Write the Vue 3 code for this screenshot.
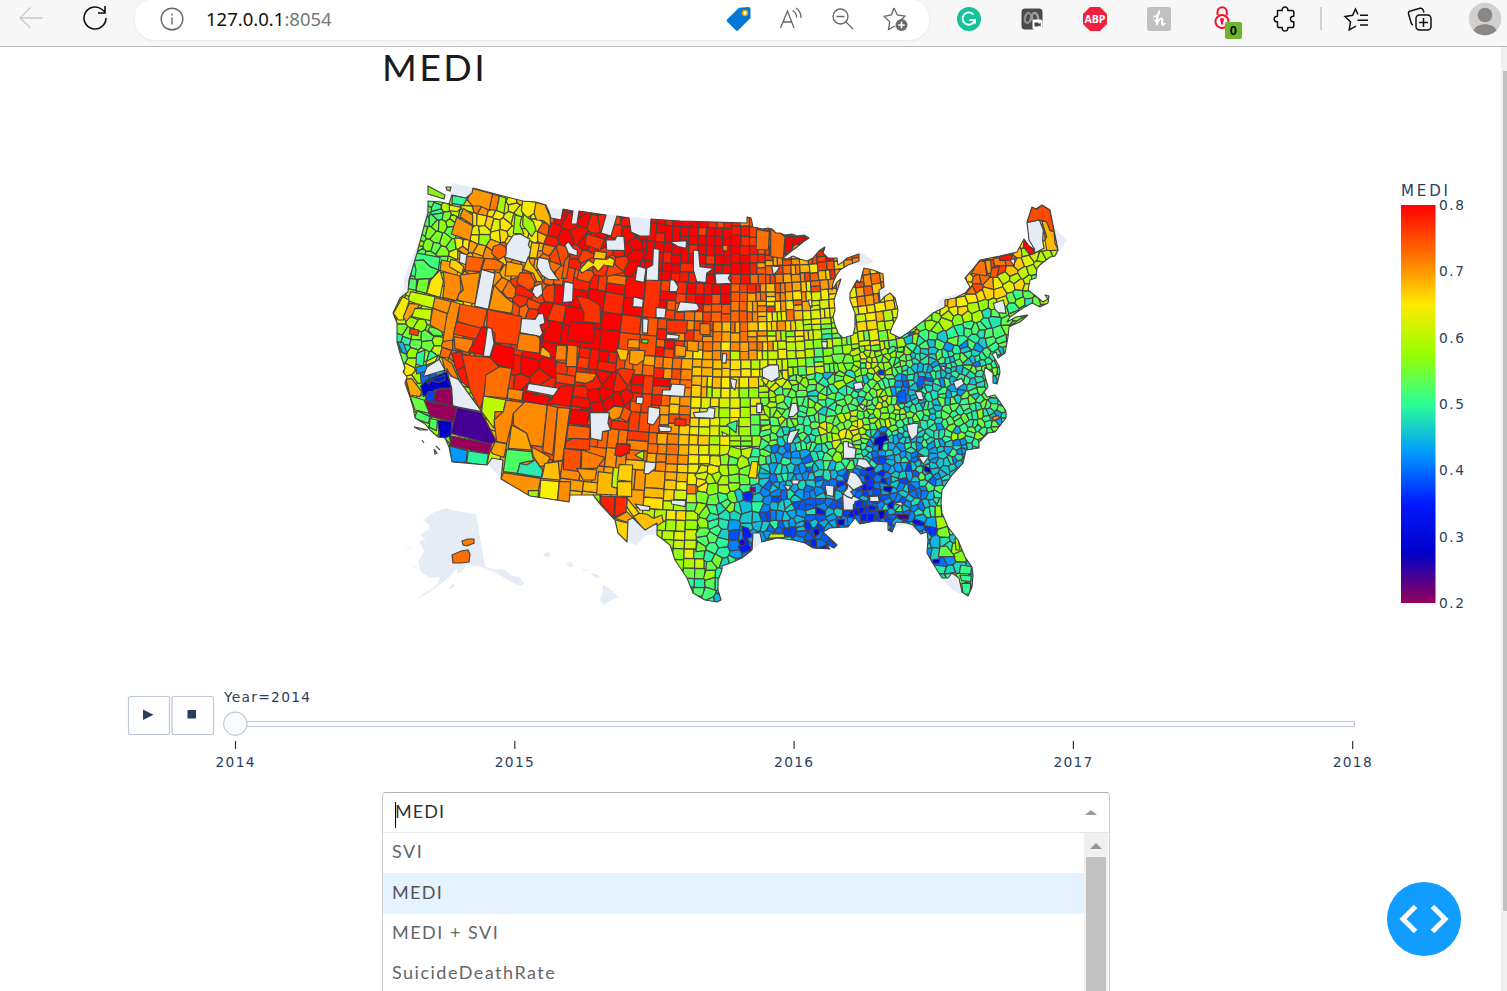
<script setup>
// ---------- colour scale ----------
const scale = [
  [0.2, 150, 0, 90], [0.275, 0, 0, 200], [0.35, 0, 25, 255], [0.425, 0, 152, 255],
  [0.5, 44, 255, 150], [0.575, 151, 255, 0], [0.65, 255, 234, 0], [0.725, 255, 111, 0], [0.8, 255, 0, 0]
]
function colour(v) {
  v = Math.max(0.2, Math.min(0.7999, v))
  const i = Math.floor((v - 0.2) / 0.075)
  const a = scale[i], b = scale[i + 1], t = (v - a[0]) / 0.075
  return `rgb(${[1, 2, 3].map(k => Math.round(a[k] + (b[k] - a[k]) * t)).join(',')})`
}
const stops = scale.map(s => ({ o: (0.8 - s[0]) / 0.6, c: `rgb(${s[1]},${s[2]},${s[3]})` })).reverse()

// ---------- outline of the counties that have data ----------
const outline = 'M428,201 441,202 449,204 452,195 466,198 472,193 473,188 503,196 523,201 536,202 546,205 549,212 551,218 561,220 563,209 573,211 571,224 577,224 579,211 606,215 601,233 611,236 617,216 629,218 631,232 640,236 650,236 651,219 680,221 747,223 747,217 751,218 753,227 763,229 768,228 772,229 776,233 780,233 785,235 792,234 797,236 804,235 809,238 803,242 797,247 789,253 783,258 787,259 793,256 800,259 807,261 813,258 820,250 825,247 823,253 828,258 837,258 838,265 843,262 847,258 859,254 859,261 848,265 840,270 836,276 833,283 832,290 837,282 841,279 838,288 834,300 835,310 833,317 835,325 838,333 843,338 853,335 855,327 855,313 850,300 850,293 857,280 860,283 862,275 864,268 873,270 883,274 884,287 879,290 880,302 884,297 890,293 895,298 898,310 897,317 892,327 890,333 900,338 909,332 918,325 926,319 933,313 945,307 945,300 955,298 965,293 970,287 965,278 972,270 980,260 1000,256 1017,252 1024,239 1029,246 1035,250 1029,240 1027,222 1032,207 1036,209 1042,205 1050,210 1054,230 1058,250 1055,256 1050,257 1045,261 1041,264 1037,268 1036,278 1030,280 1028,290 1037,297 1043,302 1048,299 1045,295 1049,296 1048,303 1040,307 1032,303 1023,308 1010,317 1007,322 1016,317 1027,315 1018,322 1009,327 1008,337 1005,353 998,358 996,352 992,354 999,366 1000,372 997,384 993,383 993,373 985,367 984,373 988,387 984,392 987,397 995,395 1000,402 1006,411 1006,418 995,432 988,433 979,442 979,448 966,450 963,463 952,475 942,490 941,503 942,513 948,527 958,540 965,557 972,567 973,575 972,587 968,596 962,592 959,578 952,573 948,578 942,578 937,570 932,562 927,553 928,540 927,532 921,534 913,525 907,523 896,522 892,532 888,530 888,522 875,521 860,524 855,518 848,527 830,528 823,532 837,545 834,548 826,544 830,549 813,548 805,543 793,540 777,538 762,542 760,533 753,533 752,550 742,558 733,562 722,566 722,570 718,580 718,590 721,600 717,602 705,600 693,593 687,578 675,560 670,545 657,535 657,523 645,530 633,518 628,520 627,542 618,533 615,520 600,504 593,495 570,495 569,502 530,496 501,479 503,460 492,458 487,465 452,462 449,447 445,438 438,437 430,430 425,424 415,418 413,407 410,397 405,383 407,377 403,372 405,368 400,353 397,342 397,323 393,313 400,298 408,292 409,280 417,253 421,238 425,223 428,213Z'

// ---------- regional levels: x, y, value * 100 ----------
const levels = '435,210,52 440,240,55 430,262,52 455,215,58 480,235,64 500,225,64 520,215,62 535,200,66 525,240,61 480,205,71 500,250,70 470,260,70 545,245,72 560,235,80 570,215,81 530,270,70 530,290,76 600,240,78 600,265,75 590,300,82 620,300,79 640,260,82 680,240,82 730,250,81 715,290,79 690,300,79 760,245,77 785,250,73 770,280,73 810,275,71 825,258,74 740,285,76 560,330,82 600,340,83 660,320,78 660,345,77 690,330,73 720,320,71 750,310,73 750,340,70 790,310,67 820,310,63 800,340,61 830,340,54 815,360,56 690,370,69 720,370,66 750,370,65 780,365,61 640,345,73 530,370,79 570,370,77 610,390,82 640,385,78 640,360,70 600,370,79 560,395,78 660,390,77 680,395,68 720,400,61 760,400,60 670,415,72 640,420,76 650,445,73 670,450,71 690,440,67 720,440,61 750,440,57 720,460,61 640,470,69 665,470,70 690,480,66 720,480,59 700,510,57 740,470,56 735,500,53 720,520,50 750,500,46 680,520,62 680,550,60 700,560,56 700,590,50 720,550,49 740,540,40 745,520,44 765,450,48 790,450,44 770,480,45 790,500,42 780,520,41 800,470,44 810,440,50 820,500,41 820,530,39 780,420,54 800,400,52 820,390,50 800,385,55 840,370,55 830,410,50 870,360,58 860,390,50 900,360,54 920,350,50 880,335,60 870,310,64 870,285,72 890,310,65 860,300,69 870,410,52 885,400,61 900,390,42 920,385,46 890,420,57 860,430,58 830,430,60 850,430,60 880,440,41 900,440,45 860,500,39 875,480,39 890,460,44 900,480,43 930,480,45 910,500,43 920,520,42 930,460,47 950,430,50 950,450,47 980,420,49 990,415,50 970,400,50 940,400,49 930,380,48 960,380,48 980,370,50 930,345,48 960,335,48 985,340,46 1000,345,50 940,320,58 960,310,60 950,300,70 980,300,64 980,280,69 1000,290,62 1000,265,73 1015,275,62 1030,265,60 1040,290,57 1010,300,56 1030,310,53 1020,320,54 990,315,53 930,525,42 945,520,60 950,545,52 935,555,42 950,570,48 965,580,50 400,310,62 415,330,58 430,340,54 405,345,48 415,360,60 410,380,66 430,375,40 420,365,55 410,300,62 420,270,51 435,300,62 450,350,74 480,340,76'
  .split(' ').map(s => s.split(',').map(Number))
function level(x, y) {
  let sw = 0, sv = 0
  for (const [ax, ay, v] of levels) {
    const d = (ax - x) ** 2 + (ay - y) ** 2 + 20
    const w = 1 / (d * d)
    sw += w; sv += w * v
  }
  return sv / sw / 100
}

let seed = 20147
function rnd() {
  seed = (seed * 1664525 + 1013904223) >>> 0
  return seed / 4294967296
}
// conic bend of the county grid
const bend = (u, v) => [u + 0.00092 * (u - 740) * (v - 400), v - 0.00046 * (u - 740) ** 2]

function cellSize(x, y) {
  if (x < 470) return y < 265 ? 8.5 : y < 400 ? 9.5 : 16
  if (x < 548) return y < 260 ? 10.5 : y < 320 ? 11.5 : 16
  if (x < 655) return y < 285 ? 12.5 : y < 355 ? 22 : y < 430 ? 12 : 16
  if (x < 700) return y < 330 ? 11 : 10.5
  if (x < 760) return y < 300 ? 10 : 8.9
  if (x < 850) return y > 370 ? 7.5 : 8.2
  if (y < 345) return 8.8
  if (x > 925 && y > 515) return 9.8
  return x > 860 && y > 350 && y < 510 ? 6.2 : 7.2
}
function irregular(x, y) {
  if (x > 838 && !(y < 350 && x < 905)) return true
  if (x > 765 && y > 375) return true
  if (x > 700 && y > 440 && y - 440 > (760 - x) * 0.4) return true
  if (x < 548 && y < 400) return true
  if (x < 640 && y < 275) return true
  return x > 590 && x < 632 && y > 372 && y < 425
}
const seeds = []
const cells = []
const P = p => p.map(q => q[0].toFixed(1) + ',' + q[1].toFixed(1)).join(' ')
function tint(x, y) {
  const n = x < 660 ? 0.035 : x < 760 ? 0.055 : 0.078
  const spike = rnd() < 0.06 ? (rnd() - 0.5) * 0.14 : 0
  return colour(level(x, y) + (rnd() + rnd() - 1) * n + spike)
}
function split(u0, v0, u1, v1) {
  const [x, y] = bend((u0 + u1) / 2, (v0 + v1) / 2)
  const w = u1 - u0, h = v1 - v0, s = cellSize(x, y) * 1.17
  if (w * h > s * s || w > 2 * s || h > 2 * s) {
    const t = 0.44 + rnd() * 0.12
    if (w > h * (0.85 + rnd() * 0.3)) {
      split(u0, v0, u0 + w * t, v1); split(u0 + w * t, v0, u1, v1)
    } else {
      split(u0, v0, u1, v0 + h * t); split(u0, v0 + h * t, u1, v1)
    }
    return
  }
  if (x < 380 || x > 1075 || y < 175 || y > 615) return
  const c = tint(x, y), irr = irregular(x, y)
  seeds.push({ x: x + (rnd() - 0.5) * w * 0.6, y: y + (rnd() - 0.5) * h * 0.6, s, c, irr })
  cells.push({ c, p: P([bend(u0, v0), bend(u1, v0), bend(u1, v1), bend(u0, v1)]) })
}
for (let u = 340; u < 1120; u += 39) for (let v = 170; v < 700; v += 38) split(u, v, u + 39, v + 38)

// irregular counties: cells nearest to each seed
const bins = {}
const key = (x, y) => Math.floor(x / 30) + '_' + Math.floor(y / 30)
seeds.forEach(s => (bins[key(s.x, s.y)] ||= []).push(s))
for (const s of seeds) {
  if (!s.irr) continue
  const r = s.s * 1.6
  let poly = [[s.x - r, s.y - r], [s.x + r, s.y - r], [s.x + r, s.y + r], [s.x - r, s.y + r]]
  for (let i = -1; i <= 1; i++) for (let j = -1; j <= 1; j++) {
    for (const o of bins[key(s.x + i * 30, s.y + j * 30)] || []) {
      if (o === s) continue
      const nx = o.x - s.x, ny = o.y - s.y
      const m = (nx * (o.x + s.x) + ny * (o.y + s.y)) / 2
      const out = []
      poly.forEach((a, k) => {
        const b = poly[(k + 1) % poly.length]
        const da = a[0] * nx + a[1] * ny - m, db = b[0] * nx + b[1] * ny - m
        if (da <= 0) out.push(a)
        if (da * db < 0) {
          const t = da / (da - db)
          out.push([a[0] + (b[0] - a[0]) * t, a[1] + (b[1] - a[1]) * t])
        }
      })
      poly = out
    }
  }
  if (poly.length > 2) cells.push({ c: s.c, p: P(poly) })
}

// ---------- individually drawn counties, in thirds of a pixel from each sheet's origin ----------
const L = '#e5ecf6'
const parse = txt => txt.trim().split('\n').map(l => {
  const [c, ...p] = l.trim().split(' ')
  return { c: c === 'L' ? L : c, p: p.join(' ') }
})
const sheets = [
  { at: [380, 170], items: parse(`
#ff9800 278,55 338,72 330,122 300,108 278,108 262,90
#ff7800 338,72 358,78 350,122 328,118
#a6f500 358,78 378,84 372,130 350,122
#f5eb00 428,92 468,96 470,125 440,145 424,122
#ffb400 468,97 495,104 510,140 512,170 490,152 470,150 462,130
#2fff90 218,76 262,84 250,106 216,100
#ff9200 250,115 278,135 278,165 240,140
#ff9200 230,142 278,168 270,212 214,192
#f5eb00 208,105 245,112 232,125 208,122
#9dfa00 405,135 425,140 420,165 432,192 400,190
#9dfa00 430,132 460,155 468,180 455,200 428,165
#3cff80 105,248 180,262 175,300 150,290 130,270 102,272
#4cff60 102,272 130,270 150,290 175,300 160,322 150,326 104,328 108,300
#4cff60 90,325 110,328 108,362 84,356
#70ff30 115,328 148,326 140,370 108,362
#ffe600 180,300 190,335 180,382 140,370 152,330
#ffa000 185,270 240,282 230,320 180,300
#ffd000 212,268 230,272 252,290 245,312 225,300 208,290
L 240,248 262,255 258,285 238,276
#ff8a00 190,305 240,318 243,360 228,392 188,382 193,345
#ff8f00 240,315 300,308 285,402 232,390 236,372 250,360
L 305,298 345,310 325,418 284,408
#ff9200 342,345 375,380 400,400 395,430 326,418
#ff6000 260,258 312,265 300,305 255,302
#ff7000 315,265 345,268 370,280 360,300 305,298
L 400,195 420,192 450,208 445,225 454,240 440,280 375,262 380,225
#ff6000 340,230 362,222 378,232 378,255 355,270 335,250
#ffa500 380,275 430,285 425,318 375,318
#ffc000 445,260 450,278 465,295 490,335 470,335 460,310 430,298
#ffc800 455,218 478,220 470,265 448,262
L 475,262 505,268 512,295 530,322 538,330 505,328 485,315 470,290
#ff5000 420,308 450,310 465,335 462,350 440,365 410,335
L 462,350 485,340 488,370 472,385 455,370
#ff1a00 410,345 430,350 462,372 455,385 405,372
#c8ff00 92,365 165,380 160,415 120,405 84,392
#f5eb00 68,380 88,390 70,450 55,450 40,430
#ffa000 88,400 120,403 100,430 78,455 70,440
#c8ff00 105,415 155,418 152,452 95,440
#5aff40 150,470 185,480 188,498 158,495 144,480
#ff3c00 90,475 116,480 114,497 88,492
#13b0e0 52,515 70,518 82,552 68,548
#2cf5a0 110,550 135,540 130,590 108,582
#0098ff 108,592 138,585 146,600 110,612
#e5f000 138,575 175,555 165,575 140,585
L 140,592 178,568 195,600 130,620
#ff9200 165,382 214,395 208,432 158,415
#ff8a00 158,415 205,432 195,490 150,465
#ff8a00 214,393 240,402 218,510 188,515 200,440
#ff5500 240,402 322,418 308,480 232,455
#ff4000 322,418 425,440 418,525 345,518 345,490 320,472
#ff3c00 230,455 306,475 290,508 220,492
#ff8000 222,500 280,510 270,550 225,535
#ff0800 305,470 322,475 312,555 265,545 290,505
L 322,472 335,475 342,520 330,560 310,558
#ff0000 345,520 402,535 400,598 340,580 332,560
#ff1500 215,550 245,545 256,585 230,603
#ff1500 230,603 258,585 270,655 245,635
#ff4000 246,555 330,562 360,595 360,605 320,635 318,660 300,720 270,660
#ff8000 185,560 215,580 240,635 228,630 195,600
L 425,445 465,448 475,432 490,430 495,460 480,465 488,490 480,500 420,488
#ff8000 418,490 470,497 480,505 478,550 410,540
#ffb000 485,528 510,548 512,565 480,555
L 553,335 580,340 578,395 548,398
L 555,225 565,215 580,235 592,240 592,258 565,250
#ff3000 620,192 675,208 660,240 615,225
#ff5a00 555,270 570,255 560,325 545,325
#ffe000 600,298 625,270 640,280 645,265 680,268 690,262 704,270 700,290 672,285 655,305 640,288 605,310
#ffc000 645,243 680,248 675,268 640,265
#ff0000 570,455 645,462 640,520 562,510
#ff3000 590,378 625,385 660,405 662,460 610,455 612,430
#ff8000 563,525 592,528 590,590 558,590
#ff8000 530,525 560,528 558,570 525,570`) },
  { at: [380, 370], items: parse(`
L 200,-5 212,18 235,28 305,125 218,108 212,45
#0000c8 122,48 140,30 200,5 215,55 185,55 165,60 130,80
#0019e0 138,35 195,15 195,30 175,38 155,32 145,42
#0040ff 145,65 165,65 160,95 135,90
#96005a 168,62 180,57 215,55 218,108 160,95
#96005a 132,92 230,110 222,158 150,138
#460096 232,112 305,128 350,215 330,222 212,190
#0000c8 172,150 216,155 212,205 180,205
#96005a 215,198 335,222 328,252 208,228
#0098ff 208,228 262,242 258,278 215,275
#2cf5a0 265,243 325,252 320,287 260,278
#6aff40 90,78 132,90 148,130 105,120
#4cff60 112,122 150,140 145,160 103,145
#4cff60 150,145 172,150 170,182 148,172
#70ff30 195,205 208,198 212,225
#ffa500 78,28 95,25 125,65 120,80 90,75
#c0fa00 310,78 378,90 370,125 345,125 342,175 305,125
#ff7000 318,15 358,-10 395,-5 380,85 312,78
#ff8a00 378,90 435,98 400,130 395,160 380,220 350,215 342,150 370,125
#ff8a00 435,95 502,105 488,230 450,225 440,190 400,165 400,130
#ff7800 502,105 533,112 518,255 488,245
#ff8800 533,112 570,115 548,270 520,275
#ffa500 395,165 440,190 455,240 385,235
#4cff60 380,238 455,245 460,272 440,275 420,280 412,310 370,305
#2ceab0 420,280 440,285 465,270 488,300 484,322 412,310
#ffa500 455,230 510,262 500,285 480,290 460,260
#ffc000 495,280 535,275 540,330 485,325
#f8f000 482,330 538,335 532,390 478,385
#ff8a00 538,335 572,335 568,397 533,390
#ff9200 370,308 482,325 475,362 445,378 363,328
#a6f500 445,362 476,362 474,382 445,378
#ffa000 345,215 380,222 372,262 340,252 332,245
#ff8a00 385,55 430,62 425,92 382,85
#ff8000 588,5 650,12 640,30 618,40 585,35
L 445,40 540,55 525,78 440,62
#ff0000 430,68 512,80 500,105 428,92
#ff0c00 540,50 580,45 572,110 505,100
#ff0000 572,118 628,122 620,168 568,160
L 630,128 688,128 684,160 692,180 668,185 665,212 632,205
#ff6000 565,165 630,172 628,208 560,205
#ff4000 558,215 580,205 630,208 628,240 555,235
#ff5000 552,235 604,242 600,305 550,298
#ff7c00 605,240 660,258 675,262 650,295 604,295
#ffa000 590,295 650,300 645,330 610,330
#ff1500 710,220 750,222 748,250 705,255
#ffb800 655,305 698,310 695,350 712,355 710,375 650,372
#ffd000 718,283 758,285 755,335 712,330
#ffd000 712,335 755,335 755,380 712,378
#ff2000 662,378 704,380 702,445 662,400
#ff2800 706,380 742,383 738,425 705,442
#ffd500 742,385 778,430 760,440 740,410
#ffa000 705,445 740,425 760,445 750,460
#ffd500 705,450 748,460 742,517 712,495
#ffc000 760,440 778,430 800,432 820,445 845,435 850,455 835,465 810,500 800,490
#a6f500 638,375 660,375 660,400`) },
  { at: [600, 190], items: parse(`
L 18,150 45,150 50,138 72,140 75,182 20,180
L 160,175 178,178 175,272 138,270 140,235 158,225
L 112,228 138,235 132,278 105,272
L 210,155 260,152 258,175 235,170
L 280,180 296,182 300,230 342,235 320,250 318,278 290,275 280,240
L 345,252 392,250 385,265 395,280 348,282
L 100,320 130,328 128,352 98,350
L 168,352 198,355 195,384 168,382
L 240,335 290,340 298,355 290,362 230,365
L 210,270 222,270 235,290 230,305 208,305
L 128,385 145,388 142,430 128,428
L 200,432 238,436 235,447 198,446
L 188,600 210,600 215,582 256,585 252,620 186,615
L 487,535 510,525 535,525 538,560 515,575 487,560
L 390,565 410,570 405,600 395,590
L 368,490 380,492 378,520 366,518
L 515,228 540,230 530,245 520,255
L 110,620 130,622 128,642 108,640
L 625,330 635,330 636,352 628,345
L 665,455 682,455 680,475 667,472
L 470,640 487,640 487,660 470,660
#4cff40 125,448 145,450 143,460 125,458
#ffc400 48,475 85,480 80,510 60,510
#ff9a00 85,448 118,450 118,475 82,472
#ffa000 90,480 135,482 132,510 110,525 88,520
#ff7000 470,118 508,125 505,180 468,178
#ff7000 512,118 540,128 555,140 550,205 512,200
#ff8000 368,165 384,167 382,183 368,182
#ff0000 558,140 582,140 578,175 552,195
#ff0000 585,140 632,140 575,170
#ff3000 200,390 262,392 260,430 200,428
#ff7c00 300,400 330,402 330,435 300,432
#ff9800 262,452 296,455 294,485 262,482
#ff9800 225,465 258,470 256,500 225,498`) },
  { at: [600, 400], items: parse(`
L 145,20 180,25 178,48 160,75 142,70
L 135,185 168,188 165,205 145,222 132,220
L 175,78 215,82 212,95 180,95
L 280,38 320,35 325,22 345,25 342,55 285,52
L 570,95 598,88 585,110 575,130 562,130 562,115
L 105,312 150,320 148,332 120,330
L 213,300 258,302 255,320 215,312
L 675,255 702,258 700,290 680,285
L 735,125 755,130 768,150 765,175 730,170
L 745,215 770,225 760,245 770,265 752,275 760,285 750,330 728,330 730,280 742,265
L 470,12 485,12 485,38 470,38
L 575,10 590,10 595,35 580,50 565,50
L 550,255 572,258 565,272
L 575,240 598,240 595,252 577,252
L 365,95 385,105 370,110
#96005a 450,262 466,262 466,276 450,276
#0019ff 425,378 445,385 458,410 440,415 455,450 425,460 415,440 430,420
#0000e0 415,425 430,415 438,430 425,440
#2cff90 388,70 412,62 408,98 380,75
#ffd800 455,185 474,185 470,235 445,232
#c8f000 510,402 552,402 555,412 505,415
#0000c8 712,358 734,358 732,375 714,375
#0000d0 640,390 655,385 660,400 645,410
#ff2800 226,55 258,58 256,78 224,76
#ff1000 50,132 90,135 88,158 62,170 45,165
#9dfa00 105,165 132,150 130,180`) },
  { at: [840, 390], items: parse(`
L 10,155 25,155 25,170 48,175 45,205 10,205
L 55,205 78,208 95,230 75,235 50,225
L 30,245 48,250 60,265 70,285 40,300 20,280
L 8,310 22,320 35,325 40,318 60,328 40,345 40,360 10,360
L 88,320 115,318 118,335 90,335
L 200,105 220,100 235,100 232,135 215,150 205,130
L 235,200 268,198 250,222
L 55,45 75,45 70,60
L 232,10 255,20 245,32 235,28
L 160,340 185,335 188,348
#0000c8 105,145 140,132 145,150 132,155 125,182 115,180 115,165 100,165
#0000c8 250,225 270,235 275,250 255,245
#0000d0 130,290 158,290 152,308 132,302
#460096 163,372 208,374 205,388 180,388
#0019ff 62,370 82,370 82,395 62,392
#0019ff 82,370 105,370 100,395 82,395
#0030ff 45,335 65,330 70,350 45,355
#0019ff 85,345 110,350 105,362 85,360
#0000d0 115,362 135,362 132,385 118,388
#60ff40 300,470 320,468 345,500 295,500
#2cff90 362,525 395,530 392,552 358,550
#2cff90 360,555 394,558 392,575 365,572
#2cff90 365,580 392,580 390,610 370,615
#0000c8 280,508 300,508 298,520 275,520
#a6f500 345,445 355,445 360,480 348,480
#ff8000 455,82 475,76 478,86 462,92`) },
  { at: [850, 190], items: parse(`
L 530,97 568,90 580,120 578,150 582,175 555,188 545,170 528,155
#ff4800 530,97 545,50 560,58 575,45 600,60 613,118 600,125 585,95 568,90
#ffb800 575,92 590,96 600,122 612,125 615,160 625,180 600,182 590,180 585,150 590,140
#ff0000 522,150 535,160 555,190 540,195 520,170
#ff7000 365,250 375,230 390,212 405,215 410,258
#ff9800 405,212 422,210 425,250 412,250
#ff5000 425,235 448,230 440,262 420,262
#ff1000 448,200 488,192 485,210 450,212
L 430,340 460,330 465,350 468,370 445,368 435,358
L 310,575 335,565 342,582 318,598
L 195,605 215,605 222,630 205,628
L 10,580 35,575 40,595 15,600
L 270,530 285,530 285,545
L 480,210 495,205 492,228
#0030ff 85,540 102,540 102,555 85,555
#0060ff 145,605 165,600 170,640 140,635
#0060ff 205,560 225,560 215,600 200,585
#ff9800 195,418 207,420 207,432 195,430
#0060ff 175,430 192,424 192,432 178,438`) }
]
const base = [
  '452,183 470,187 550,208 650,219 750,222 751,240 548,240 470,200 452,195 447,210 449,200',
  '428,201 420,240 413,255 404,278 404,290 398,297 412,305 425,260 440,220 440,200',
  '487,463 501,479 510,455 495,455', '627,540 636,546 646,535 657,535 655,515 628,515',
  '1040,220 1054,228 1067,240 1056,256 1040,250', '838,262 860,252 870,258 874,262 862,266 850,264',
  '935,563 943,580 953,590 962,595 965,570 940,560', '885,520 890,530 905,524 920,533 930,533 928,515',
  '716,565 735,558 740,545 760,530 762,542 750,552 722,570 718,595', '939,300 945,297 965,292 965,300 945,312 936,311',
  '880,285 886,288 886,296 880,302', '890,332 903,336 903,342 890,340',
  '980,350 984,372 990,395 1002,410 985,400 978,362', '989,395 1000,400 1008,416 1000,420 990,410'
]
const alaska = 'M446,508 456,511 476,514 485,567 497,570 503,569 513,576 520,577 524,584 519,586 505,578 496,573 485,568 476,566 466,565 462,572 457,574 458,567 449,577 442,583 434,589 425,595 416,599 425,593 436,586 440,577 430,578 420,571 418,562 424,551 419,541 426,539 419,535 428,530 430,526 424,520 434,512Z'
const islands = ['449,587 453,584 455,586 450,589', '406,546 411,549', '413,566 417,568', '543,554 549,552 550,556 546,557', '567,563 571,562 574,566 569,567', '582,570 589,571', '591,573 598,575 600,578 594,577', '603,585 610,589 618,597 609,601 604,605 600,599 603,593']
const coast = ['428,186 445,195 444,199 428,194', '446,187 451,187 450,191 447,190', '414,427 420,428 428,430 420,430', '422,440 424,443', '436,446 440,450', '434,449 437,453 435,454', '1010,326 1020,319 1028,315 1020,322']
const alaskan = [{ c: '#ff8000', p: '462,541 468,539 474,539 474,543 467,546 463,545' }, { c: '#ff6f00', p: '452,555 461,551 468,550 470,554 469,562 461,563 453,563' }]
const ticks = ['0.8', '0.7', '0.6', '0.5', '0.4', '0.3', '0.2']
const years = [2014, 2015, 2016, 2017, 2018]
const options = ['SVI', 'MEDI', 'MEDI + SVI', 'SuicideDeathRate']
</script>

<template>
  <div class="window">
    <header class="toolbar">
      <div class="nav">
        <svg width="24" height="24" viewBox="0 0 24 24" fill="none" stroke="#c8c8c8" stroke-width="1.3"><path d="M23.500 12H1M11.500 1.500 1 12l10.500 10" /></svg>
        <svg width="26" height="26" viewBox="0 0 26 26" fill="none" stroke="#111" stroke-width="1.6"><path d="M24 13a11 11 0 1 1-4-8.500L23 7M23 1v7h-7" /></svg>
      </div>
      <div class="address">
        <svg class="info" width="24" height="24" viewBox="0 0 24 24" fill="none" stroke="#666" stroke-width="1.4"><circle cx="12" cy="12" r="10.800" /><path d="M12 10.500v7M12 6.500v2" /></svg>
        <span class="url">127.0.0.1<i>:8054</i></span>
        <div class="tools">
          <svg width="26" height="26" viewBox="0 0 26 26"><path d="M1 13.500 13 1.800 22.500 1q2 0 2 2v9L12 24.500q-1 .5-2 0L1 15.500q-.8-1 0-2z" fill="#0078d7" /><circle cx="19" cy="7" r="2.400" fill="#fff" stroke="#e8a800" stroke-width="1.500" /></svg>
          <svg width="26" height="26" viewBox="0 0 26 26" fill="none" stroke="#666" stroke-width="1.300"><path d="M2.500 22 9.500 5l6.500 17M5 16h9M14.500 4.500q4 2 4.200 7M18 2q5 3.500 5 10" /></svg>
          <svg width="26" height="26" viewBox="0 0 26 26" fill="none" stroke="#666" stroke-width="1.300"><circle cx="10.500" cy="10.500" r="7.500" /><path d="M6.500 10.500h8M16 16l7 7" /></svg>
          <svg width="28" height="28" viewBox="0 0 28 28" fill="none" stroke="#666" stroke-width="1.300"><path d="m12 3 3.400 7 7.500 1.100-5.200 5.200M13 21l-6.500 3.500 1.200-7.600L2.200 11.400 9.300 10 12 3" /><circle cx="19.500" cy="20" r="6" fill="#6a6a6a" stroke="none" /><path d="M19.500 16.800v6.400M16.300 20h6.400" stroke="#fff" stroke-width="1.500" /></svg>
        </div>
      </div>
      <div class="extensions">
        <svg width="24" height="24" viewBox="0 0 24 24"><circle cx="12" cy="12" r="12" fill="#15c39a" /><path d="M16.500 7.500A6.200 6.200 0 1 0 17.500 14M12.500 13h5.500v3.500" fill="none" stroke="#fff" stroke-width="1.900" /></svg>
        <svg width="24" height="24" viewBox="0 0 24 24"><rect x="1.500" y="1.500" width="21" height="21" rx="3.500" fill="#4a4a4a" /><ellipse cx="8" cy="11" rx="3" ry="5" fill="none" stroke="#8c8c8c" stroke-width="2.500" transform="rotate(12 8 11)" /><ellipse cx="15" cy="10.500" rx="3" ry="4.500" fill="none" stroke="#9a9a9a" stroke-width="2.500" transform="rotate(-12 15 10.500)" /><rect x="12.500" y="12.500" width="10" height="10.500" rx="2.500" fill="#fff" /><path d="M14.500 15.500h4v4h-4zM18.500 17l2.200-1.200v3.800l-2.200-1.200z" fill="#444" /></svg>
        <svg width="24" height="24" viewBox="0 0 24 24"><path d="M7 0h10l7 7v10l-7 7H7l-7-7V7z" fill="#f0203f" /><text x="12" y="16.300" text-anchor="middle" textLength="21" lengthAdjust="spacingAndGlyphs" class="abp">ABP</text></svg>
        <svg width="24" height="24" viewBox="0 0 24 24"><rect width="24" height="24" rx="3" fill="#c0c0c0" /><path d="M6.500 9.500Q11 9.500 12 6t-.5-.2Q10 10 9.500 18q2-6 4.500-6.500 1.800 0 1.300 2.500-.8 3.500.5 3.800 1.200 0 2.200-2M7.500 13.500q3 0 5.500-1" fill="none" stroke="#fff" stroke-width="1.900" /></svg>
        <div class="lock">
          <svg width="17" height="25" viewBox="0 0 17 25" fill="none" stroke="#f5102a" stroke-width="2"><path d="M3.500 9V6a4.600 4.600 0 0 1 9.300 0v3" /><circle cx="8" cy="15.500" r="6.500" stroke-dasharray="34 7" transform="rotate(60 8 15.500)" /><path d="M8 14v4.500" /><circle cx="8" cy="14" r="1" /></svg>
          <b>0</b>
        </div>
        <svg width="24" height="26" viewBox="0 0 24 26" fill="none" stroke="#111" stroke-width="1.500" stroke-linejoin="round"><path d="M4.500 4.500h4.700c-.8-4.600 6.400-4.600 5.600 0H19q1.800 0 1.800 1.800v3.900c-4.400-.8-4.400 6.400 0 5.600v4q0 1.800-1.800 1.800h-4.200c.8 4.600-6.400 4.600-5.600 0H6.300q-1.800 0-1.800-1.800v-4C.1 16.600.1 9.400 4.500 10.200z" /></svg>
      </div>
      <span class="rule"></span>
      <div class="actions">
        <svg width="26" height="26" viewBox="0 0 26 26" fill="none" stroke="#111" stroke-width="1.500"><path d="M15 8.500 12.500 3 9.600 9.300 2 10.500l5.500 5.300-1.300 8 6.800-3.600M17 9.300h8M14.500 14.200H25M17 19h8" /></svg>
        <svg width="26" height="26" viewBox="0 0 26 26" fill="none" stroke="#111" stroke-width="1.500"><path d="M6 19q-1.500-.5-2-2.500L1.600 8Q1 5.500 3.500 5L13 2.300q2.500-.6 3.200 2L17 6.500" /><rect x="9" y="9" width="15" height="15" rx="3.500" /><path d="M16.500 12v9M12 16.500h9" /></svg>
        <svg class="avatar" width="34" height="34" viewBox="0 0 34 34"><circle cx="17" cy="17" r="16.300" fill="#d2d0ce" /><circle cx="17" cy="13" r="7.300" fill="#8a8886" /><path d="M5.500 28.500C8 20 26 20 28.500 28.500a16.300 16.300 0 0 1-23 0z" fill="#8a8886" /></svg>
      </div>
    </header>

    <main class="page">
      <div class="content">
        <h1>MEDI</h1>
        <svg class="plot" width="1501" height="692" viewBox="0 100 1501 692">
          <defs>
            <clipPath id="land"><path :d="outline" /></clipPath>
            <linearGradient id="bar" x1="0" y1="0" x2="0" y2="1"><stop v-for="s in stops" :key="s.o" :offset="s.o" :stop-color="s.c" /></linearGradient>
          </defs>
          <g fill="#e5ecf6">
            <polygon v-for="b in base" :key="b" :points="b" />
            <path :d="alaska" />
            <polygon v-for="b in islands" :key="b" :points="b" stroke="#e5ecf6" stroke-width=".6" />
          </g>
          <g clip-path="url(#land)" stroke="#444" stroke-width="1.2" stroke-linejoin="round">
            <polygon v-for="(c, i) in cells" :key="i" :points="c.p" :fill="c.c" />
            <g v-for="(s, i) in sheets" :key="'s' + i" :transform="`translate(${s.at[0]} ${s.at[1]}) scale(.33333)`" stroke-width="3.600">
              <polygon v-for="(q, j) in s.items" :key="j" :points="q.p" :fill="q.c" />
            </g>
          </g>
          <path :d="outline" fill="none" stroke="#444" stroke-width="1.150" stroke-linejoin="round" />
          <g stroke="#444" stroke-width="1.150">
            <polygon v-for="c in coast" :key="c" :points="c" fill="#8cf020" />
            <polygon v-for="a in alaskan" :key="a.p" :points="a.p" :fill="a.c" />
          </g>

          <text class="label" x="1401" y="195.500" font-size="15" textLength="47">MEDI</text>
          <rect x="1401" y="205" width="34.500" height="398" fill="url(#bar)" />
          <text v-for="(t, i) in ticks" :key="t" class="label" x="1439" :y="210 + i * 66.300" font-size="13.800" textLength="25">{{ t }}</text>

          <g fill="#fff" stroke="#bec8d9" stroke-width="1.200">
            <rect x="128.500" y="696.500" width="41" height="38" rx="2" />
            <rect x="172" y="696.500" width="41.500" height="38" rx="2" />
            <rect x="230" y="721.500" width="1124.500" height="5" rx="1" fill="#f8fafc" />
            <circle cx="235.300" cy="723.700" r="11.600" fill="#f8fafc" />
          </g>
          <path d="M143 709.500v10.500l10.500-5.200zM187.500 710h8.500v8.500h-8.500z" fill="#2a3f5f" />
          <text class="label" x="224" y="702" font-size="13.800" textLength="86">Year=2014</text>
          <g v-for="(y, i) in years" :key="y">
            <path :d="`M${235.500 + i * 279.300} 741v8`" stroke="#333" stroke-width="1.200" />
            <text class="label" :x="215.500 + i * 279.300" y="767" font-size="13.800" textLength="39">{{ y }}</text>
          </g>
        </svg>
        <div class="select">
          <div class="value"><span class="caret"></span>MEDI<i class="up"></i></div>
          <div class="menu">
            <div class="options">
              <div v-for="o in options" :key="o" class="option" :class="{ selected: o === 'MEDI' }">{{ o }}</div>
            </div>
            <div class="track"><i class="up"></i><span></span></div>
          </div>
        </div>
      </div>
      <div class="scroll"><span></span></div>
      <button class="debug" aria-label="Debug">
        <svg width="74" height="74" viewBox="0 0 74 74" fill="none" stroke="#fff" stroke-width="5"><path d="M28.500 24.500 16 37l12.500 12.500M45.500 24.500 58 37 45.500 49.500" /></svg>
      </button>
    </main>
  </div>
</template>

<style>
html, body { margin: 0; overflow: hidden; background: #fff; }
</style>
<style scoped>
.window { width: 1507px; height: 991px; overflow: hidden; display: flex; flex-direction: column; font-family: "Open Sans", sans-serif; }
.toolbar { flex: none; height: 46px; background: #f7f7f7; border-bottom: 1px solid #b9b9b9; display: flex; }
.toolbar > * { flex: none; }
.nav { width: 135px; height: 36px; display: flex; align-items: center; gap: 39px; padding-left: 19px; box-sizing: border-box; }
.nav svg { flex: none; }
.address { width: 794px; height: 40px; background: #fff; border-radius: 16px 18px 20px 20px; box-shadow: 0 1px 3px #e4e4e4; display: flex; align-items: center; box-sizing: border-box; padding: 0 19px 2px 25px; }
.url { margin: -2px 0 0 22px; font: 18.5px "Noto Sans", sans-serif; color: #111; }
.url i { font-style: normal; color: #777; }
.tools { margin-left: auto; display: flex; align-items: center; gap: 26px; }
.extensions { width: 380px; margin-left: 8px; display: grid; grid-template-columns: repeat(6, 1fr); justify-items: center; align-items: center; height: 38px; }
.abp { font: bold 11px "Open Sans", sans-serif; fill: #fff; }
.lock { position: relative; width: 24px; height: 26px; margin-left: 8px; }
.lock b { position: absolute; left: 11px; top: 16px; width: 17px; height: 17px; border-radius: 2px; background: #6eb52f; color: #000; font: bold 13px/18px "Liberation Sans", sans-serif; text-align: center; }
.rule { width: 2px; height: 23px; margin: 7px 2px 0 3px; background: #d0d0d0; }
.actions { width: 183px; height: 38px; display: grid; grid-template-columns: 64px 63px 56px; justify-items: center; align-items: center; }
.avatar { justify-self: end; margin-right: 5px; }
.page { position: relative; flex: 1; display: flex; min-height: 0; }
.content { width: 1501px; display: flex; flex-direction: column; }
h1 { margin: 0 0 0 382px; height: 53px; flex: none; font: 400 37.5px/40px Lato, "Open Sans", sans-serif; letter-spacing: 2.4px; color: #1b1b1b; }
.plot { flex: none; display: block; }
.label { font-family: "DejaVu Sans", Verdana, sans-serif; fill: #2a3f5f; }
.select { flex: none; margin-left: 382px; width: 728px; height: 210px; box-sizing: border-box; border: 1px solid #ccc; border-top-color: #b3b3b3; border-radius: 4px 4px 0 0; font: 18px Lato, sans-serif; letter-spacing: 1.1px; color: #333; }
.value { position: relative; height: 39px; line-height: 36px; padding-left: 12px; border-bottom: 1px solid #e6e6e6; }
.caret { position: absolute; left: 12px; top: 9px; width: 1px; height: 26px; background: #000; }
.up { width: 0; height: 0; border: 6px solid transparent; border-top: 0; border-bottom: 5px solid #999; }
.value .up { position: absolute; right: 12px; top: 17px; }
.menu { display: flex; height: 170px; }
.options { flex: 1; }
.option { height: 40.300px; line-height: 37.500px; padding-left: 9px; color: #666; letter-spacing: 1.500px; }
.selected { background: #e5f2ff; color: #555; line-height: 39px; letter-spacing: 1.300px; }
.track { width: 24px; margin-right: 1px; background: #f0f0f0; display: flex; flex-direction: column; align-items: center; }
.track .up { margin: 10px 0 8px; border-width: 0 6px 6px; }
.track span { width: 20px; flex: 1; background: #c1c1c1; }
.scroll { width: 6px; background: #f0f0f0; box-sizing: border-box; padding: 24px 0 0 2px; }
.scroll span { display: block; height: 840px; background: #c1c1c1; }
.debug { position: absolute; left: 1387px; top: 835px; width: 74px; height: 74px; padding: 0; border: 0; border-radius: 50%; background: #119dff; }
.debug svg { display: block; }
</style>
